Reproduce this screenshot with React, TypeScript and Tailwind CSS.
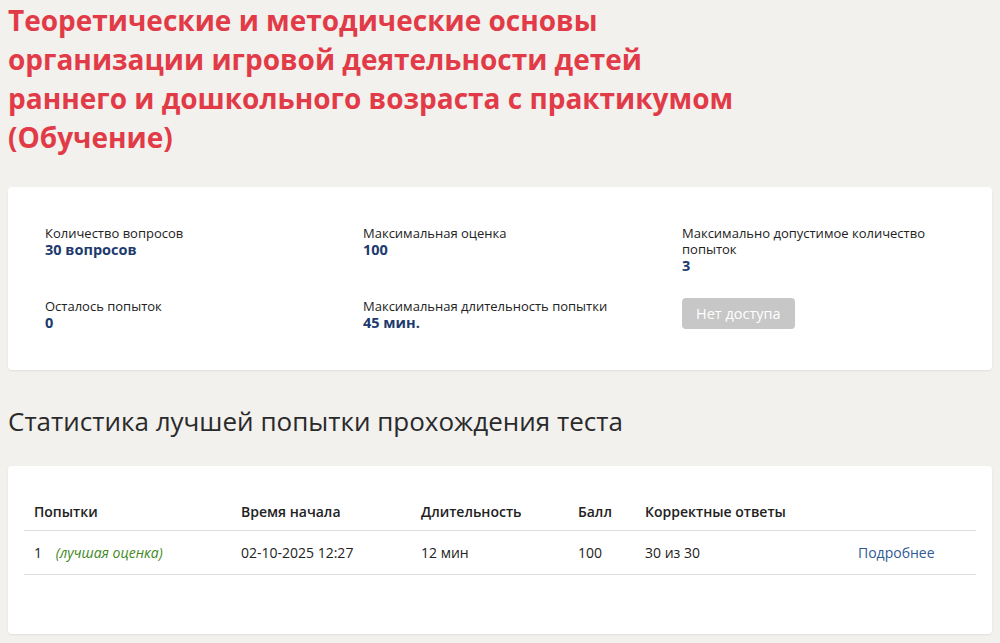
import React from 'react';

const stats = [
  { label: 'Количество вопросов', value: '30 вопросов' },
  { label: 'Максимальная оценка', value: '100' },
  { label: 'Максимально допустимое количество попыток', value: '3' },
  { label: 'Осталось попыток', value: '0' },
  { label: 'Максимальная длительность попытки', value: '45 мин.' },
];

const App: React.FC = () => {
  return (
    <div className="min-h-[643px] bg-[#f2f1ee] px-2 pt-[1px] pb-4 font-['Open_Sans',sans-serif] text-[#222]">
      <h1 className="text-[28px] font-bold leading-[39px] text-[#e23b48] max-w-[760px]">
        Теоретические и методические основы организации игровой деятельности детей раннего и дошкольного возраста с практикумом (Обучение)
      </h1>

      <div className="mt-[30px] rounded bg-white px-[37px] pt-[38px] pb-[38px] shadow-[0_1px_2px_rgba(0,0,0,0.08)]">
        <div className="grid grid-cols-[318px_319px_1fr] gap-y-[23px]">
          {stats.map(s => (
            <div key={s.label} className="pr-4">
              <div className="text-[13px] leading-[16px] text-[#222]">{s.label}</div>
              <div className="text-[14.5px] font-bold leading-[18px] text-[#1d3a6e]">{s.value}</div>
            </div>
          ))}
          <div>
            <button className="h-[31px] rounded bg-[#c7c7c7] px-[14px] text-[14.5px] text-white">
              Нет доступа
            </button>
          </div>
        </div>
      </div>

      <h2 className="mt-[34px] text-[26px] leading-[34px] text-[#2a2a2a]">
        Статистика лучшей попытки прохождения теста
      </h2>

      <div className="mt-[28px] rounded bg-white px-4 pt-[27px] pb-[59px] shadow-[0_1px_2px_rgba(0,0,0,0.08)]">
        <table className="w-full border-collapse text-left text-[14px]">
          <thead>
            <tr className="border-b border-[#dedede]">
              <th className="w-[217px] py-[8px] pl-[10px] font-semibold">Попытки</th>
              <th className="w-[180px] py-[8px] font-semibold">Время начала</th>
              <th className="w-[157px] py-[8px] font-semibold">Длительность</th>
              <th className="w-[67px] py-[8px] font-semibold">Балл</th>
              <th className="w-[213px] py-[8px] font-semibold">Корректные ответы</th>
              <th className="py-[8px]"></th>
            </tr>
          </thead>
          <tbody>
            <tr className="border-b border-[#dedede]">
              <td className="py-[11px] pl-[10px]">
                1 <span className="ml-[10px] italic text-[#3f8a1f]">(лучшая оценка)</span>
              </td>
              <td className="py-[11px]">02-10-2025 12:27</td>
              <td className="py-[11px]">12 мин</td>
              <td className="py-[11px]">100</td>
              <td className="py-[11px]">30 из 30</td>
              <td className="py-[11px]">
                <a href="#" className="text-[#2f5a96]">Подробнее</a>
              </td>
            </tr>
          </tbody>
        </table>
      </div>
    </div>
  );
};

export default App;
